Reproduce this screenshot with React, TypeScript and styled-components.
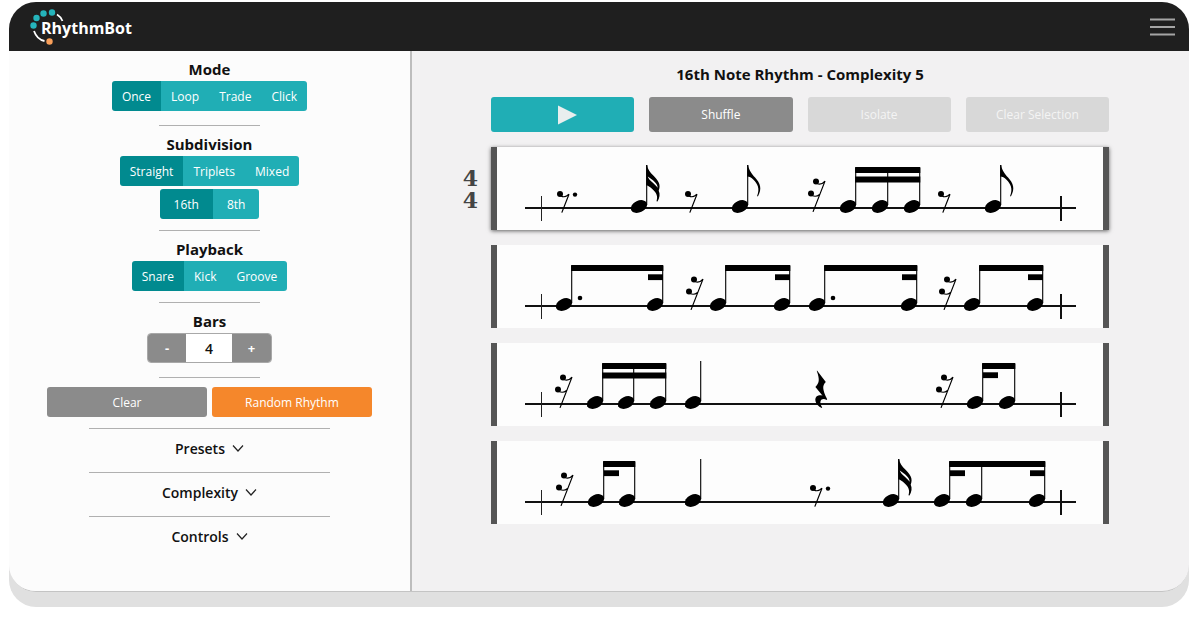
import React, { useState } from "react";
import styled, { createGlobalStyle } from "styled-components";

const GlobalStyle = createGlobalStyle`
  *, *::before, *::after { box-sizing: border-box; }
  body {
    margin: 0;
    background: #fff;
    color: #111;
    font-family: "Open Sans", "Noto Sans", sans-serif;
    font-size: 12px;
  }
  button, input { font: inherit; }
`;

const teal = "#20aeb5";
const tealDark = "#018a8f";
const grey = "#8b8b8b";

const Frame = styled.div`
  margin: 2px 11px 26px 9px;
  border-radius: 27px;
  box-shadow: 0 15px 0 #e0e0e0;
`;

const Window = styled.div`
  border-radius: 27px;
  overflow: hidden;
  border-bottom: 1px solid #c4c4c4;
  background: #f2f1f2;
`;

const Header = styled.header`
  display: flex;
  align-items: center;
  justify-content: space-between;
  height: 49px;
  padding: 0 14px 0 20px;
  background: #1f1f1f;
`;

const Logo = styled.a`
  display: grid;
  align-items: center;
  color: #fff;
  text-decoration: none;
  & > * { grid-area: 1 / 1; }
`;

const LogoMark = styled.svg`
  display: block;
  width: 36px;
  height: 38px;
`;

const LogoName = styled.span`
  padding: 2px 0 0 12px;
  font-size: 16px;
  font-weight: 700;
  line-height: 24px;
`;

const MenuButton = styled.button`
  display: flex;
  padding: 0;
  border: 0;
  background: none;
  cursor: pointer;
`;

const Body = styled.div`
  display: grid;
  grid-template-columns: minmax(340px, 403fr) minmax(0, 777fr);
`;

const Sidebar = styled.aside`
  display: flex;
  flex-direction: column;
  align-items: center;
  padding: 8px 0 31px;
  background: #fcfcfc;
  border-right: 2px solid #bdbdbd;
`;

const Section = styled.section<{ $roomy?: boolean }>`
  display: flex;
  flex-direction: column;
  align-items: center;
  padding-bottom: ${(p) => (p.$roomy ? 14 : 11)}px;
`;

const SectionTitle = styled.h2`
  margin: 0 0 1px;
  font-size: 15px;
  font-weight: 700;
  line-height: 21px;
`;

const Rule = styled.hr<{ $wide?: boolean }>`
  width: ${(p) => (p.$wide ? 60 : 25)}%;
  height: 1px;
  margin: 0 0 ${(p) => (p.$wide ? 0 : 8)}px;
  border: 0;
  background: #b0b0b0;
`;

const Group = styled.div`
  display: flex;
  height: 30px;
  border-radius: 3px;
  overflow: hidden;
  & + & { margin-top: 3px; }
`;

const Choice = styled.button<{ $pad?: number }>`
  padding: 0 ${(p) => p.$pad ?? 10}px;
  border: 0;
  background: ${teal};
  color: #fff;
  font-weight: 500;
  cursor: pointer;
  &[aria-pressed="true"] { background: ${tealDark}; }
`;

const Stepper = styled.div`
  display: grid;
  grid-template-columns: 38px 46px 39px;
  height: 30px;
  border: 1px solid #a8a8a8;
  border-radius: 4px;
  overflow: hidden;
`;

const StepButton = styled.button`
  padding: 0;
  border: 0;
  background: ${grey};
  color: #fff;
  font-size: 13px;
  font-weight: 700;
  cursor: pointer;
`;

const StepValue = styled.input`
  width: 100%;
  min-width: 0;
  padding: 0;
  border: 0;
  background: #fff;
  color: #111;
  font-size: 14px;
  font-weight: 600;
  text-align: center;
`;

const Actions = styled.div`
  display: grid;
  grid-template-columns: 1fr 1fr;
  gap: 5px;
  width: 81%;
  margin: 1px 0 11px;
`;

const Action = styled.button<{ $color: string; $tall?: boolean }>`
  display: flex;
  align-items: center;
  justify-content: center;
  height: ${(p) => (p.$tall ? 35 : 30)}px;
  padding: 0;
  border: 0;
  border-radius: 3px;
  background: ${(p) => p.$color};
  color: #fff;
  font-weight: 500;
  cursor: pointer;
  &:disabled {
    background: #d8d8d8;
    color: #f4f4f4;
    cursor: default;
  }
`;

const Disclosure = styled.button`
  display: flex;
  align-items: center;
  justify-content: center;
  gap: 7px;
  height: 43px;
  padding: 0 0 5px;
  border: 0;
  background: none;
  color: #111;
  font-size: 14px;
  font-weight: 600;
  cursor: pointer;
`;

const Main = styled.main`
  display: grid;
  grid-template-columns: 79px minmax(0, 1fr) 80px;
  align-content: start;
  padding-top: 12px;
`;

const Title = styled.h1`
  grid-column: 2;
  margin: 0 0 12px;
  font-size: 15px;
  font-weight: 700;
  line-height: 22px;
  text-align: center;
`;

const Toolbar = styled.div`
  grid-column: 2;
  display: grid;
  grid-template-columns: repeat(4, 1fr);
  gap: 15px;
  margin-bottom: 15px;
`;

const TimeSignature = styled.div`
  grid-column: 1;
  display: flex;
  flex-direction: column;
  align-items: flex-end;
  padding: 20px 13px 0 0;
  color: #444;
  font-family: "DejaVu Serif", serif;
  font-size: 22px;
  font-weight: 700;
  line-height: 22px;
`;

const Score = styled.div`
  grid-column: 2;
  display: grid;
  gap: 15px;
`;

const Bar = styled.div<{ $current?: boolean }>`
  border: solid #555;
  border-width: 0 6px;
  background: #fdfdfd;
  box-shadow: ${(p) => (p.$current ? "0 1px 4px rgba(0, 0, 0, 0.6)" : "none")};
`;

const Staff = styled.svg`
  display: block;
  width: 100%;
`;

/* Notation: every x is the centre of a note head or of a rest's lower dot. */
type BeamNote = { x: number; dotted?: boolean; stub?: "left" | "right" };
type Mark =
  | { kind: "eighthRest"; x: number; dotted?: boolean }
  | { kind: "sixteenthRest"; x: number }
  | { kind: "quarterRest"; x: number }
  | { kind: "note"; x: number; flags: 0 | 1 | 2 }
  | { kind: "beam"; notes: BeamNote[]; double?: boolean };

const bars: Mark[][] = [
  [
    { kind: "eighthRest", x: 63, dotted: true },
    { kind: "note", x: 142, flags: 2 },
    { kind: "eighthRest", x: 191 },
    { kind: "note", x: 243, flags: 1 },
    { kind: "sixteenthRest", x: 314 },
    { kind: "beam", double: true, notes: [{ x: 351 }, { x: 383 }, { x: 415 }] },
    { kind: "eighthRest", x: 444 },
    { kind: "note", x: 496, flags: 1 },
  ],
  [
    { kind: "beam", notes: [{ x: 67, dotted: true }, { x: 158, stub: "left" }] },
    { kind: "sixteenthRest", x: 192 },
    { kind: "beam", notes: [{ x: 221 }, { x: 285, stub: "left" }] },
    { kind: "beam", notes: [{ x: 320, dotted: true }, { x: 412, stub: "left" }] },
    { kind: "sixteenthRest", x: 445 },
    { kind: "beam", notes: [{ x: 475 }, { x: 538, stub: "left" }] },
  ],
  [
    { kind: "sixteenthRest", x: 61 },
    { kind: "beam", double: true, notes: [{ x: 98 }, { x: 129 }, { x: 161 }] },
    { kind: "note", x: 196, flags: 0 },
    { kind: "quarterRest", x: 324 },
    { kind: "sixteenthRest", x: 442 },
    { kind: "beam", notes: [{ x: 478, stub: "right" }, { x: 510 }] },
  ],
  [
    { kind: "sixteenthRest", x: 62 },
    { kind: "beam", notes: [{ x: 99, stub: "right" }, { x: 130 }] },
    { kind: "note", x: 196, flags: 0 },
    { kind: "eighthRest", x: 316, dotted: true },
    { kind: "note", x: 394, flags: 2 },
    { kind: "beam", notes: [{ x: 445, stub: "right" }, { x: 477 }, { x: 540, stub: "left" }] },
  ],
];

function Head({ x, top }: { x: number; top: number }) {
  return (
    <>
      <ellipse cx={x} cy={59.5} rx={8.6} ry={5.8} transform={`rotate(-25 ${x} 59.5)`} />
      <path d={`M${x + 7.7} ${top}V58`} stroke="#000" strokeWidth={1.1} />
    </>
  );
}

function Glyph({ mark }: { mark: Mark }) {
  switch (mark.kind) {
    case "eighthRest":
      return (
        <g transform={`translate(${mark.x} 47)`}>
          <circle r={3} />
          <path d="M1 2C4 3.6 6.6 2.6 9 .2L1.8 18.6" fill="none" stroke="#000" strokeWidth={1.2} />
          {mark.dotted && <circle cx={15} cy={0.6} r={2.2} />}
        </g>
      );
    case "sixteenthRest":
      return (
        <g transform={`translate(${mark.x} 46.5)`}>
          <circle r={3} />
          <circle cx={5} cy={-12} r={3} />
          <path d="M6 -10C9 -8.6 11.6 -9.6 14 -12.4L2 18.4M1 2C4 3.4 6.6 2.6 8.6 1" fill="none" stroke="#000" strokeWidth={1.2} />
        </g>
      );
    case "quarterRest":
      return (
        <path
          transform={`translate(${mark.x} 27.5)`}
          d="M-4 0L4.800 11.400C1.400 15 1 18 6.200 28.800L5.600 29.400C1 27 -3 30 1.200 37L.8 37.600C-6 34.600 -8 26.400 -2.600 25C-1 24.600 .6 24.800 1.600 25.200L-5.600 16.600C-1.800 12.600 -1 9.600 -4.200 .6Z"
        />
      );
    case "note":
      return (
        <g>
          <Head x={mark.x} top={18} />
          {mark.flags === 1 && (
            <path
              transform={`translate(${mark.x + 7.7} 18)`}
              d="M-.5 0H.5C1.2 5.4 4 8.6 7.4 12.6C12.6 18.6 14.6 23.6 10.2 31.4L9.4 31C12.4 23.6 9.8 18.8 5.8 14.8C3.6 12.6 1.8 11.8 -.5 11.6Z"
            />
          )}
          {mark.flags === 2 && (
            <path
              transform={`translate(${mark.x + 7.7} 18)`}
              d="M-.5 0H.5C1 4.600 3.400 7.400 6.600 10.600C11.200 15.400 14.600 19.200 12 25.800C13.600 29.200 13 32.600 10.800 36.600L9.800 36.200C11.600 30.600 9.400 27.600 5.800 24.200C3.600 22.200 1.800 20.600 -.5 20.200ZM1 11.400C2.200 15.200 7.200 17.600 11 22.800C11 19.400 8 16.600 5.200 14.400C3.400 13 2 11.800 1 11.400Z"
              fillRule="evenodd"
            />
          )}
        </g>
      );
    case "beam": {
      const start = mark.notes[0].x + 7.1;
      const width = mark.notes[mark.notes.length - 1].x + 8.3 - start;
      return (
        <g>
          {mark.notes.map((note) => (
            <g key={note.x}>
              <Head x={note.x} top={21} />
              {note.dotted && <circle cx={note.x + 16} cy={53} r={2.3} />}
              {note.stub && (
                <rect x={note.stub === "left" ? note.x - 7 : note.x + 8} y={29.3} width={15} height={5.8} />
              )}
            </g>
          ))}
          <rect x={start} y={20} width={width} height={6} />
          {mark.double && <rect x={start} y={29.5} width={width} height={6} />}
        </g>
      );
    }
  }
}

function ChoiceGroup({ label, options, pad }: { label: string; options: string[]; pad?: number }) {
  const [selected, setSelected] = useState(options[0]);
  return (
    <Group role="group" aria-label={label}>
      {options.map((option) => (
        <Choice
          key={option}
          type="button"
          $pad={pad}
          aria-pressed={option === selected}
          onClick={() => setSelected(option)}
        >
          {option}
        </Choice>
      ))}
    </Group>
  );
}

export default function App() {
  const [count, setCount] = useState(4);
  return (
    <>
      <GlobalStyle />
      <Frame>
        <Window>
          <Header>
            <Logo href="#">
              <LogoMark viewBox="0 0 36 38" aria-hidden="true">
                <g fill="#25b4bb">
                  <circle cx="4.5" cy="17.5" r="3.2" />
                  <circle cx="7.5" cy="10" r="3.2" />
                  <circle cx="14.5" cy="5.5" r="3.2" />
                  <circle cx="23" cy="4.5" r="3.2" />
                </g>
                <circle cx="20.5" cy="33.5" r="3.2" fill="#f9a05b" />
                <path d="M28 6.5Q31.500 8.500 33.500 13M5 23Q8 31.500 15.500 33" fill="none" stroke="#fff" strokeWidth="1.8" />
              </LogoMark>
              <LogoName>RhythmBot</LogoName>
            </Logo>
            <MenuButton type="button" aria-label="Menu">
              <svg width="25" height="20" viewBox="0 0 25 20" stroke="#a5a5a5" strokeWidth="2" aria-hidden="true">
                <path d="M0 2.500H25M0 10H25M0 17.500H25" />
              </svg>
            </MenuButton>
          </Header>
          <Body>
            <Sidebar>
              <Section $roomy>
                <SectionTitle>Mode</SectionTitle>
                <ChoiceGroup label="Mode" options={["Once", "Loop", "Trade", "Click"]} />
              </Section>
              <Rule />
              <Section>
                <SectionTitle>Subdivision</SectionTitle>
                <ChoiceGroup label="Subdivision" options={["Straight", "Triplets", "Mixed"]} />
                <ChoiceGroup label="Note value" options={["16th", "8th"]} pad={14} />
              </Section>
              <Rule />
              <Section>
                <SectionTitle>Playback</SectionTitle>
                <ChoiceGroup label="Playback" options={["Snare", "Kick", "Groove"]} />
              </Section>
              <Rule />
              <Section $roomy>
                <SectionTitle as="label" htmlFor="bars">Bars</SectionTitle>
                <Stepper>
                  <StepButton type="button" onClick={() => setCount(Math.max(1, count - 1))}>-</StepButton>
                  <StepValue id="bars" value={count} readOnly />
                  <StepButton type="button" onClick={() => setCount(count + 1)}>+</StepButton>
                </Stepper>
              </Section>
              <Rule />
              <Actions>
                <Action type="button" $color={grey}>Clear</Action>
                <Action type="button" $color="#f5872b">Random Rhythm</Action>
              </Actions>
              {["Presets", "Complexity", "Controls"].map((name) => (
                <React.Fragment key={name}>
                  <Rule $wide />
                  <Disclosure type="button" aria-expanded={false}>
                    {name}
                    <svg width="12" height="8" viewBox="0 0 12 8" fill="none" stroke="#222" strokeWidth="1.200" aria-hidden="true">
                      <path d="M1 1.500L6 7L11 1.500" />
                    </svg>
                  </Disclosure>
                </React.Fragment>
              ))}
            </Sidebar>
            <Main>
              <Title>16th Note Rhythm - Complexity 5</Title>
              <Toolbar>
                <Action type="button" $tall $color={teal} aria-label="Play">
                  <svg width="30" height="20" viewBox="0 0 30 20" fill="#e9eeee" aria-hidden="true">
                    <path d="M10 .5L29 10L10 19.500Z" />
                  </svg>
                </Action>
                <Action type="button" $tall $color={grey}>Shuffle</Action>
                <Action type="button" $tall $color={grey} disabled>Isolate</Action>
                <Action type="button" $tall $color={grey} disabled>Clear Selection</Action>
              </Toolbar>
              <TimeSignature>
                <span>4</span>
                <span>4</span>
              </TimeSignature>
              <Score>
                {bars.map((marks, i) => (
                  <Bar key={i} $current={i === 0}>
                    <Staff viewBox="0 0 606 83" role="img" aria-label={`Bar ${i + 1}`}>
                      <path d="M28 61H579" stroke="#111" strokeWidth={1.8} />
                      <path d="M44.500 49V74" stroke="#222" strokeWidth={1} />
                      <path d="M564 49V74" stroke="#111" strokeWidth={2} />
                      {marks.map((mark, j) => (
                        <Glyph key={j} mark={mark} />
                      ))}
                    </Staff>
                  </Bar>
                ))}
              </Score>
            </Main>
          </Body>
        </Window>
      </Frame>
    </>
  );
}
